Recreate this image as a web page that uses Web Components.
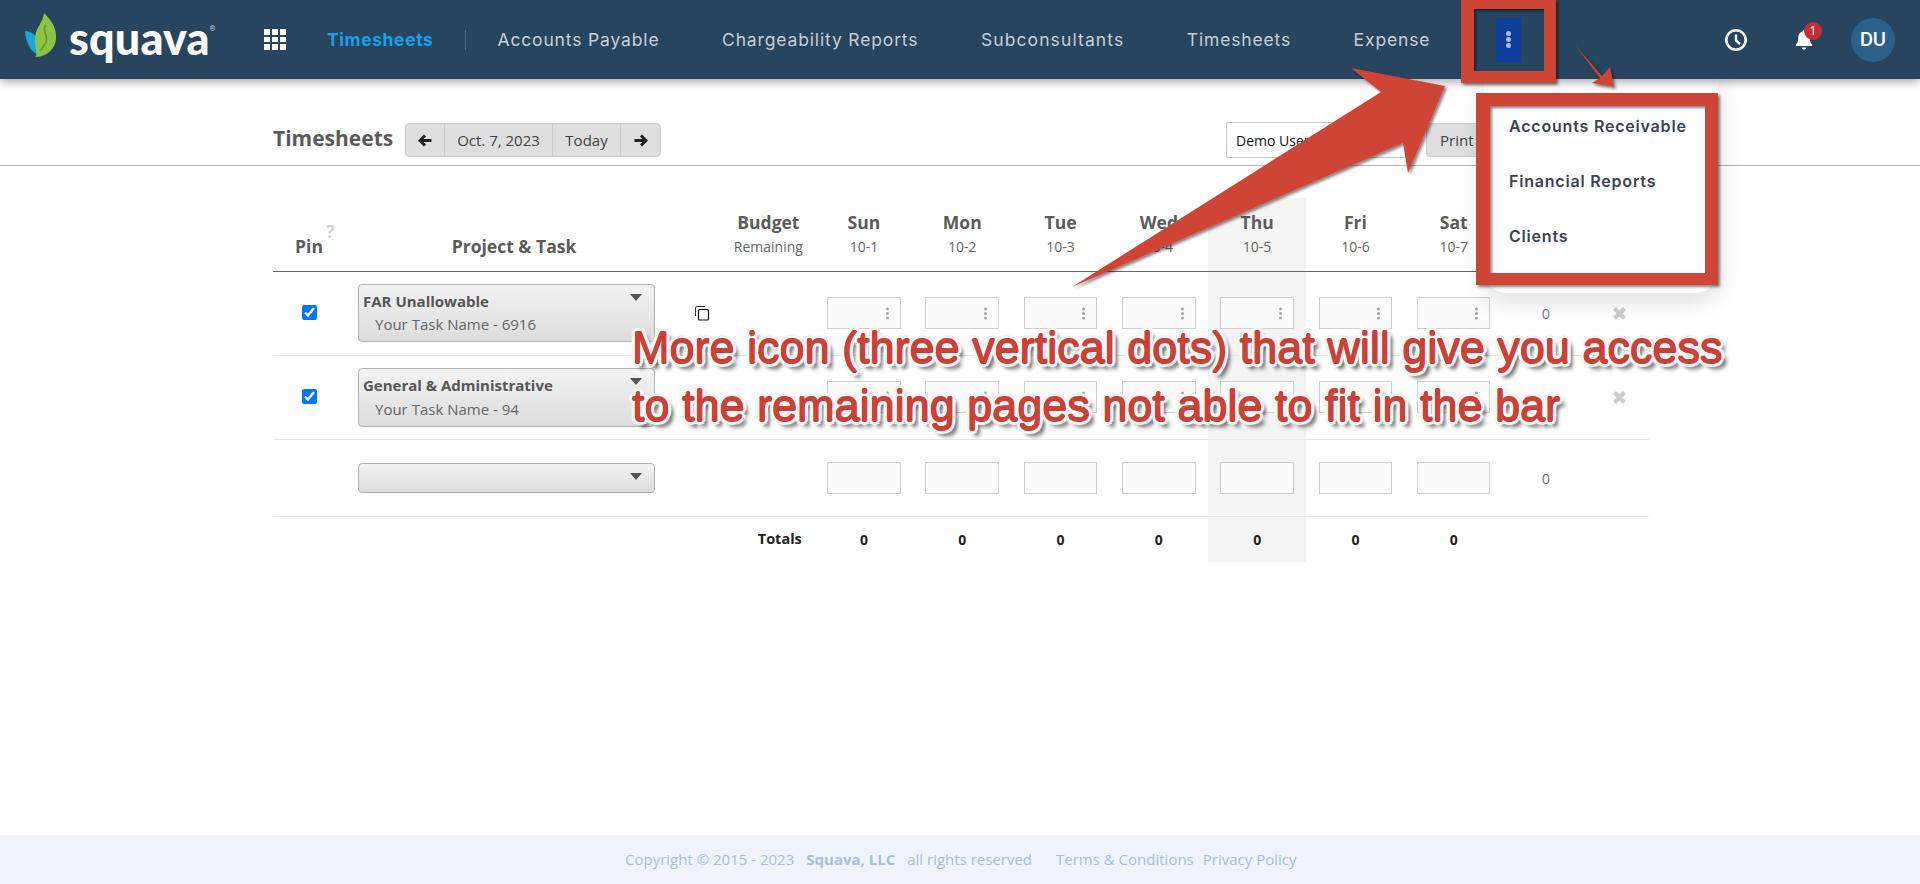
<!DOCTYPE html>
<html lang="en"><head><meta charset="utf-8"><title>Squava Timesheets</title>
<style>
html,body{margin:0;padding:0;background:#fff}
body{width:1920px;height:884px;overflow:hidden;position:relative;font-family:"Open Sans",sans-serif;display:flex;flex-direction:column;
--cols:72px 338px 39px 92.8px repeat(7,98.3px) 86.2px 60px}
sq-main{flex:1}
</style></head><body>
<sq-navbar></sq-navbar>
<sq-main>
  <sq-toolbar></sq-toolbar>
  <ts-table></ts-table>
</sq-main>
<sq-footer></sq-footer>
<sq-menu></sq-menu>
<sq-annotation></sq-annotation>
<script>
const def=(name,html)=>customElements.define(name,class extends HTMLElement{
  connectedCallback(){ if(this.shadowRoot)return; const r=this.attachShadow({mode:'open'}); r.innerHTML=typeof html==='function'?html(this):html; }
});
const NAVFONT='font-family:Inter,"Open Sans",sans-serif;';

def('sq-logo',`<style>
:host{display:flex;align-items:flex-start;width:212px;height:79px;flex:none;position:relative}
svg{display:block;flex:none;margin:13px 0 0 25px}
.t{font:900 45px/1 Lato,sans-serif;color:#fff;margin:16px 0 0 11px;letter-spacing:.1px}
.r{font:700 7px/1 "Open Sans",sans-serif;color:#b7c2cc;margin:25px 0 0 0}
</style>
<svg width="33" height="45" viewBox="0 0 33 45">
<path d="M0 18C6 18 12 22 15 30C17 36 15 41 14 42C6 40 1 30 0 18Z" fill="#19a5dd"/>
<path d="M19 0C27 8 32 16 31 26C30 36 22 44 10 44C14 40 9 36 10 24C11 14 18 10 19 0Z" fill="#8cc342"/>
<path d="M21 12C16 18 24 22 21 29C19 33 17 36 15 38" fill="none" stroke="#5e9a35" stroke-width="1.6"/>
</svg>
<div class="t">squava</div><div class="r">®</div>`);

def('sq-navitem',h=>`<style>
:host{display:flex;align-items:center;flex:none;${NAVFONT}font-size:17.5px;letter-spacing:var(--ls,.85px);color:#c6ced6;white-space:nowrap}
:host([active]){color:#12a3ea;font-weight:700;letter-spacing:.6px}
</style><slot></slot>`);

def('sq-navbar',`<style>
:host{display:flex;align-items:center;height:79px;background:#27455f;flex:none;box-shadow:0 3px 9px rgba(0,0,0,.35);position:relative;z-index:2}
.grid{display:grid;grid-template-columns:repeat(3,6px);grid-auto-rows:5.6px;gap:2px;margin:0 41px 0 52px;flex:none}
.grid i{background:#fff;display:block}
.sep{width:1px;height:20px;background:#4a6a86;margin:0 31px 0 32px;flex:none}
.items{display:flex;gap:62.5px}
.more{width:25px;height:44px;background:#0f3e9a;margin-left:66px;display:flex;flex-direction:column;align-items:center;justify-content:center;gap:1.2px;flex:none}
.more i{width:5px;height:5px;border-radius:50%;background:#a9c0dc;display:block}
.right{margin-left:auto;display:flex;align-items:center;flex:none;padding-right:25px}
.bell{position:relative;width:24px;height:30px;margin:0 35px 0 44px;display:flex;align-items:center;justify-content:center}
.badge{position:absolute;left:12px;top:-3px;width:18px;height:18px;border-radius:50%;background:#c22f3a;color:#fff;font:400 12px/18px "Open Sans",sans-serif;text-align:center}
.av{width:44px;height:44px;border-radius:50%;background:#2d6089;color:#fff;font:600 18px/44px Inter,sans-serif;text-align:center}
</style>
<sq-logo></sq-logo>
<div class="grid"><i></i><i></i><i></i><i></i><i></i><i></i><i></i><i></i><i></i></div>
<sq-navitem active>Timesheets</sq-navitem><div class="sep"></div>
<div class="items"><sq-navitem>Accounts Payable</sq-navitem><sq-navitem>Chargeability Reports</sq-navitem><sq-navitem style="--ls:1.1px">Subconsultants</sq-navitem><sq-navitem>Timesheets</sq-navitem><sq-navitem>Expense</sq-navitem></div>
<div class="more"><i></i><i></i><i></i></div>
<div class="right">
<svg width="24" height="24" viewBox="0 0 24 24"><circle cx="12" cy="12" r="9.7" fill="none" stroke="#fff" stroke-width="2.6"/><path d="M12 6.5V12.5L16 16" fill="none" stroke="#fff" stroke-width="2.4"/></svg>
<div class="bell"><svg width="18" height="21" viewBox="0 0 20 24"><path d="M10 1C11 1 11.6 1.8 11.6 2.8C15 3.6 16.6 6.5 16.6 10C16.6 14 17.5 16 19.5 18.5V19.5H.5V18.5C2.5 16 3.4 14 3.4 10C3.4 6.5 5 3.6 8.4 2.8C8.4 1.8 9 1 10 1ZM7.4 21H12.6C12.4 22.6 11.4 23.5 10 23.500C8.6 23.5 7.6 22.6 7.4 21Z" fill="#fff"/></svg><div class="badge">1</div></div>
<div class="av">DU</div>
</div>`);

def('sq-toolbar',`<style>
:host{display:flex;align-items:flex-start;border-bottom:1px solid #b4b4b4;padding:44px 404px 0 273px;box-sizing:border-box;height:87px}
h1{margin:-1px 0 0;font:700 21px/32px "Open Sans",sans-serif;color:#5b5b5b;width:132px;flex:none}
.grp{display:flex;height:34px;width:256px;box-sizing:border-box;border:1px solid #c9c9c9;border-radius:4px;background:#dedede;font:400 15px/32px "Open Sans",sans-serif;color:#444;flex:none}
.grp>*{display:flex;align-items:center;justify-content:center;border-right:1px solid #c9c9c9;box-sizing:border-box}
.grp>*:last-child{border:0}
select{margin-left:auto;width:188px;height:36px;margin-top:-1px;background:#fff;border:1px solid #c6c6c6;font:400 14px "Open Sans",sans-serif;color:#111;padding:0 5px;box-sizing:border-box;flex:none}
.print{margin-left:12px;width:90px;height:34px;box-sizing:border-box;background:#dedede;border:1px solid #c9c9c9;border-radius:4px;font:400 15px/32px "Open Sans",sans-serif;color:#444;padding-left:13px;flex:none}
</style>
<h1>Timesheets</h1>
<div class="grp"><div style="width:39px"><svg width="14" height="13" viewBox="0 0 14 13"><path d="M7 1.500L2 6.500L7 11.500M2.500 6.500H13.500" fill="none" stroke="#222" stroke-width="3"/></svg></div><div style="width:108px">Oct. 7, 2023</div><div style="width:68px">Today</div><div style="width:39px"><svg width="14" height="13" viewBox="0 0 14 13"><path d="M7 1.500L12 6.500L7 11.500M11.500 6.500H.5" fill="none" stroke="#222" stroke-width="3"/></svg></div></div>
<select><option>Demo User</option></select>
<div class="print">Print</div>`);

def('ts-hours',h=>`<style>
:host{display:flex;align-items:center;justify-content:flex-end;width:73.5px;box-sizing:border-box;background:#fbfbfb;border:1px solid #cfcfcf;padding-right:11px}
i{display:block;width:3px;height:3px;background:#a5a5a5;border-radius:50%;box-shadow:0 -4.500px #a5a5a5,0 4.500px #a5a5a5}
</style>${h.hasAttribute('dots')?'<i></i>':''}`);

def('ts-select',h=>`<style>
:host{display:block;width:297px;box-sizing:border-box;border:1px solid #b1b1b1;border-radius:4px;background:linear-gradient(#f3f3f3,#dcdcdc);position:relative;padding-left:4px}
.p{font:700 15px/20px "Open Sans",sans-serif;color:#565656;padding-top:6px}
.t{font:400 15px/20px "Open Sans",sans-serif;color:#666;padding:var(--tp,3px) 0 0 12px}
.a{position:absolute;right:12px;top:var(--at,9px);width:0;height:0;border:6px solid transparent;border-top:7px solid #555;border-bottom:0}
</style>${h.getAttribute('project')?`<div class="p">${h.getAttribute('project').replace('&','&amp;')}</div><div class="t">${h.getAttribute('task')}</div>`:''}<div class="a"></div>`);

const DAYS=[['Sun','10-1'],['Mon','10-2'],['Tue','10-3'],['Wed','10-4'],['Thu','10-5'],['Fri','10-6'],['Sat','10-7']];
const gridCss=`:host{display:grid;grid-template-columns:var(--cols);box-sizing:border-box}
.c{display:flex;align-items:center;justify-content:center;box-sizing:border-box;min-width:0}
.thu{background:#f4f4f4}`;

def('ts-head',`<style>${gridCss}
:host{height:74px;border-bottom:1px solid #666}
.c{flex-direction:column;justify-content:flex-start}
.h{font:700 17.5px/22px "Open Sans",sans-serif;color:#5b5b5b}
.s{font:400 14px/17px "Open Sans",sans-serif;color:#666;margin-top:5px}
.lo{padding-top:37px}.hi{padding-top:13px}
.q{position:absolute;font:700 18px/18px "Open Sans",sans-serif;color:#d4d4d4;margin:-13px 0 0 3px}
</style>
<div class="c lo"><div class="h">Pin<span class="q">?</span></div></div>
<div class="c lo"><div class="h">Project &amp; Task</div></div>
<div class="c"></div>
<div class="c hi"><div class="h">Budget</div><div class="s">Remaining</div></div>
${DAYS.map((d,i)=>`<div class="c hi ${i==4?'thu':''}"><div class="h">${d[0]}</div><div class="s">${d[1]}</div></div>`).join('')}
<div class="c"></div><div class="c"></div>`);

def('ts-row',h=>{
 const H=+h.getAttribute('height'),pin=h.hasAttribute('pin'),sh=h.getAttribute('sel'),inH=h.getAttribute('inh');
 const st=h.getAttribute('seltop'),it=h.getAttribute('intop');
 return `<style>${gridCss}
:host{height:${H}px}
.c{border-bottom:1px solid #e6e6e6}
input{width:15px;height:15px;margin:0 0 2px;accent-color:#0075ff}
ts-select{height:${sh}px;margin:${st}px 0 0 13px}
ts-hours{height:${inH}px;margin-top:${it}px}
.tot{font:400 14.5px "Open Sans",sans-serif;color:#75757f}
.top{align-items:flex-start}
.l{justify-content:flex-start;align-items:flex-start}
</style>
<div class="c">${pin?'<input type="checkbox" checked>':''}</div>
<div class="c l"><ts-select project="${h.getAttribute('project')||''}" task="${h.getAttribute('task')||''}"></ts-select></div>
<div class="c">${h.hasAttribute('copy')?'<svg width="16" height="16" viewBox="0 0 16 16" style="margin:0 2px 1px 0"><path d="M11 1.500H3A1.500 1.500 0 0 0 1.500 3V11" fill="none" stroke="#333" stroke-width="1"/><rect x="4.500" y="4.500" width="10" height="10.500" rx="1" fill="#fff" stroke="#111" stroke-width="1.200"/></svg>':''}</div>
<div class="c"></div>
${DAYS.map((d,i)=>`<div class="c top ${i==4?'thu':''}"><ts-hours ${pin?'dots':''}></ts-hours></div>`).join('')}
<div class="c tot">${h.hasAttribute('total')?'0':''}</div>
<div class="c">${pin?'<svg width="15" height="15" viewBox="0 0 15 15"><path d="M2.500 2.500L12.500 12.500M12.500 2.500L2.500 12.500" stroke="#cdcdcd" stroke-width="4.200"/></svg>':''}</div>`});

def('ts-totals',`<style>${gridCss}
:host{height:45px}
.v{font:700 14px/1 "Open Sans",sans-serif;color:#222}
.r{justify-content:flex-end;grid-column:1/5;font:700 14.5px/1 "Open Sans",sans-serif;color:#222;padding-right:13px}
</style>
<div class="c r">Totals</div>
${DAYS.map((d,i)=>`<div class="c v ${i==4?'thu':''}">0</div>`).join('')}`);

def('ts-table',`<style>:host{display:block;margin:32px 0 0 273px;width:1376px}</style>
<ts-head></ts-head>
<ts-row height="84" sel="58" seltop="12" inh="32" intop="25" pin project="FAR Unallowable" task="Your Task Name - 6916" copy total></ts-row>
<ts-row height="84" sel="59" seltop="12" inh="32" intop="25" pin project="General &amp; Administrative" task="Your Task Name - 94" style="--tp:4px"></ts-row>
<ts-row height="77" sel="30" seltop="23" inh="32" intop="22" total></ts-row>
<ts-totals></ts-totals>`);

def('sq-footer',`<style>
:host{display:flex;align-items:center;height:49px;background:#eef3fc;flex:none;padding:0 0 2px 625px;box-sizing:border-box;font:400 15px "Open Sans",sans-serif;color:#a9bde0;white-space:nowrap}
b{margin:0 12px;font-weight:700}
.t{margin-left:24px}.p{margin-left:9px}
</style><span>Copyright © 2015 - 2023</span><b>Squava, LLC</b><span>all rights reserved</span><span class="t">Terms &amp; Conditions</span><span class="p">Privacy Policy</span>`);

def('sq-menu',`<style>
:host{position:absolute;left:1484px;top:79px;width:234px;height:214px;background:#fff;border-radius:0 0 22px 22px;box-shadow:0 8px 24px rgba(0,0,0,.14);z-index:1;padding:27px 0 0 25px;box-sizing:border-box;${NAVFONT}font-weight:600;font-size:16px;color:#3a4257;display:flex;flex-direction:column;letter-spacing:.8px}
div{height:55px;line-height:40px}
</style><div>Accounts Receivable</div><div>Financial Reports</div><div>Clients</div>`);

const R='#cc4137',W='#f6f6f6';
const ring=[];
for(let a=0;a<16;a++){const x=(3.6*Math.cos(a*Math.PI/8)).toFixed(2),y=(3.6*Math.sin(a*Math.PI/8)).toFixed(2);ring.push(`${x}px ${y}px 1px ${W}`);}
const shadow=[`.6px 0 ${R}`,`-.6px 0 ${R}`,`0 .6px ${R}`,`0 -.6px ${R}`,...ring,`5px 6px 4px rgba(0,0,0,.6)`,`3px 3px 4px rgba(0,0,0,.6)`].join(',');

def('sq-annotation',`<style>
:host{position:absolute;inset:0;z-index:5;display:block;pointer-events:none}
svg{position:absolute;left:0;top:0}
.txt{position:absolute;left:632px;top:319px;font:400 45px/57.5px "Liberation Sans",sans-serif;color:${R};text-shadow:${shadow};white-space:nowrap}
</style>
<svg width="1920" height="884" viewBox="0 0 1920 884">
<defs><filter id="s" x="-10%" y="-10%" width="120%" height="120%"><feDropShadow dx="2" dy="2" stdDeviation="1.600" flood-color="#000" flood-opacity=".5"/></filter></defs>
<g filter="url(#s)" fill="#cf4436">
<path d="M1351 68L1445 86L1408 173L1403 143L1072 287L1381 92Z"/>
<path d="M1575 45L1602 76L1610 67L1614 87L1592 83L1600 78Z"/>
<path fill-rule="evenodd" d="M1461 0H1556V83H1461ZM1474 9V71H1544V9Z"/>
<path fill-rule="evenodd" d="M1476 93H1718V285H1476ZM1490 106V273H1705V106Z"/>
</g></svg>
<div class="txt">More icon (three vertical dots) that will give you access<br>to the remaining pages not able to fit in the bar</div>`);
</script>
</body></html>
